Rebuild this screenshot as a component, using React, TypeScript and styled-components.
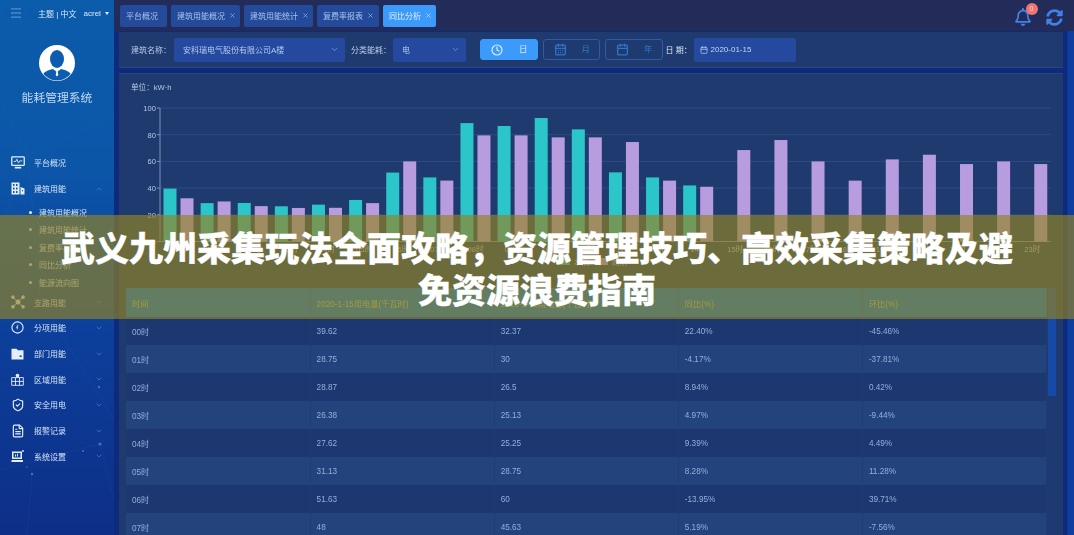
import React from 'react'
import styled, { createGlobalStyle } from 'styled-components'
import { Calendar, CalendarDays, ChevronDown, ChevronUp, Clock, FileText, Menu, ShieldCheck, X } from 'lucide-react'
import { FaRegBell, FaSyncAlt } from 'react-icons/fa'

const FONT = `"Liberation Sans", "Noto Sans CJK SC", sans-serif`

const GlobalStyle = createGlobalStyle`
  html, body { margin: 0; padding: 0; height: 100%; overflow: hidden; background: #0d2a7c; }
  #root { height: 535px; }
  * { box-sizing: border-box; }
`

const Page = styled.div`
  position: relative;
  width: 1074px;
  height: 535px;
  overflow: hidden;
  font-family: ${FONT};
`

const Shell = styled.div`
  display: grid;
  grid-template-columns: 114px 1fr;
  height: 100%;
  filter: blur(0.45px);
`

const Sidebar = styled.aside`
  position: relative;
  display: flex;
  flex-direction: column;
  overflow: hidden;
  background: linear-gradient(180deg, #0b5cab 0%, #0c56a8 30%, #0c3f9b 62%, #0e2e86 100%);
  color: #d5e3f6;
`

const SideTop = styled.div`
  display: flex;
  align-items: center;
  height: 26px;
  padding-left: 9px;
  font-size: 8px;
  color: #dce8f8;
`

const Burger = styled(Menu)`
  color: #8fb9e6;
  margin-right: 15px;
`

const Lang = styled.span`
  white-space: nowrap;
  margin-right: 7px;
`

const Caret = styled.span`
  display: inline-block;
  margin-left: 4px;
  border-left: 2.5px solid transparent;
  border-right: 2.5px solid transparent;
  border-top: 3px solid #e8f0fb;
  vertical-align: 1px;
`

const Brand = styled.div`
  display: flex;
  flex-direction: column;
  align-items: center;
  height: 124px;
  padding-top: 19px;
`

const BrandName = styled.div`
  margin-top: 7px;
  font-size: 11.8px;
  color: #c3d8f0;
  white-space: nowrap;
`

const Nav = styled.nav`
  position: relative;
  display: flex;
  flex-direction: column;
`

const NavRow = styled.div`
  display: flex;
  align-items: center;
  height: 25.7px;
  padding-left: 10.5px;
  font-size: 8px;
  color: #d5e3f6;
`

const NavIcon = styled.span`
  display: flex;
  justify-content: center;
  width: 14px;
  margin-right: 9.5px;
  color: #e4eefb;
`

const NavLabel = styled.span`
  flex: 1;
  white-space: nowrap;
`

const NavChevron = styled.span`
  display: flex;
  margin-right: 11px;
  color: #4f86c9;
`

const SubList = styled.div`
  height: 88px;
  padding-top: 2px;
`

const SubRow = styled.div`
  display: flex;
  align-items: center;
  height: 17.5px;
  padding-left: 29px;
  font-size: 8px;
  white-space: nowrap;
  color: #d5e3f6;

  &::before {
    content: '';
    width: 3px;
    height: 3px;
    margin-right: 7px;
    border-radius: 50%;
    background: #e4eefb;
  }
`

const SidebarDecor = styled.svg`
  position: absolute;
  inset: 0;
  pointer-events: none;
`

const Main = styled.main`
  display: flex;
  flex-direction: column;
  min-width: 0;
  background: linear-gradient(90deg, #0d2a7c 0, #0d2a7c 953px, #0f3f9e 954px);
`

const TopBar = styled.header`
  display: flex;
  align-items: center;
  height: 31px;
  padding: 0 11px 0 6px;
  background: #232c58;
  gap: 4px;
`

const Tab = styled.div<{ $active?: boolean; $w: number }>`
  display: flex;
  align-items: center;
  gap: 4px;
  width: ${p => p.$w}px;
  height: 22px;
  padding-left: 6px;
  border-radius: 2px;
  font-size: 8px;
  white-space: nowrap;
  color: ${p => (p.$active ? '#e2efff' : '#a9c3ea')};
  background: ${p => (p.$active ? '#3c9afa' : '#244a9b')};
`

const TopActions = styled.div`
  display: flex;
  align-items: center;
  gap: 14px;
  margin-left: auto;
  padding-top: 3px;
  color: #3f80ea;
`

const BellWrap = styled.div`
  position: relative;
  display: flex;
`

const Badge = styled.span`
  position: absolute;
  top: -5px;
  right: -5.5px;
  width: 12px;
  height: 12px;
  border-radius: 50%;
  background: #ef7473;
  color: #ffc9c4;
  font-size: 7px;
  line-height: 12px;
  text-align: center;
`

const Content = styled.div`
  flex: 1;
  display: flex;
  flex-direction: column;
  gap: 5px;
  width: 949px;
  padding: 1px 0 0 5px;
  min-height: 0;
`

const Filters = styled.section`
  display: flex;
  align-items: center;
  height: 36px;
  padding-left: 12px;
  background: #1e3a6f;
  border-bottom: 1px solid #24488a;
  font-size: 8px;
  color: #b8cbe8;
`

const FieldLabel = styled.span<{ $gap?: number; $bright?: boolean }>`
  width: ${p => p.$gap ?? 43}px;
  white-space: nowrap;
  color: ${p => (p.$bright ? '#dbe6f6' : '#b8cbe8')};
`

const Select = styled.div<{ $w: number }>`
  display: flex;
  align-items: center;
  justify-content: space-between;
  width: ${p => p.$w}px;
  height: 24px;
  margin-right: 6px;
  padding: 0 6px 0 9px;
  border-radius: 2px;
  background: #24499f;
  color: #b4cbee;
  white-space: nowrap;
`

const Arrow = styled(ChevronDown)`
  color: #7fa3dc;
`

const ModeGroup = styled.div`
  display: flex;
  gap: 5px;
  margin: 0 3px 0 8px;
`

const ModeButton = styled.div<{ $active?: boolean }>`
  display: flex;
  align-items: center;
  justify-content: space-between;
  width: 57.5px;
  height: 21.5px;
  padding: 0 9px 0 10px;
  border-radius: 3px;
  border: 1px solid ${p => (p.$active ? '#3c9afa' : '#2a5cab')};
  background: ${p => (p.$active ? '#3c9afa' : 'transparent')};
  color: ${p => (p.$active ? '#d9ecff' : '#2f74c8')};
  font-size: 8.5px;
`

const ModeText = styled.span`
  line-height: 1;
`

const DateInput = styled.div`
  display: flex;
  align-items: center;
  gap: 3px;
  width: 102px;
  height: 24px;
  padding-left: 6px;
  border-radius: 2px;
  background: #24499f;
  color: #c3d6f2;
`

const ChartPanel = styled.section`
  flex: 1;
  display: flex;
  flex-direction: column;
  min-height: 0;
  overflow: hidden;
  background: #1e3a6f;
  border-top: 1px solid #26467f;
`

const Unit = styled.div`
  height: 25px;
  padding: 7px 0 0 12px;
  font-size: 7.6px;
  color: #b8cbe8;
`

const ChartSvg = styled.svg`
  display: block;
  flex: none;
  margin-bottom: 4px;
`

const AxisText = styled.text`
  font-family: ${FONT};
  font-size: 7.6px;
  fill: #b6c8e6;
`

const TableArea = styled.div`
  display: flex;
  padding-left: 7px;
`

const DataTable = styled.table`
  width: 921px;
  flex: none;
  border-collapse: collapse;
  table-layout: fixed;
  font-size: 8.2px;
`

const HeadCell = styled.th`
  height: 29px;
  padding: 0 6px;
  font-weight: 400;
  text-align: left;
  white-space: nowrap;
  color: #c2c878;
  background: #0070e0;
  border-right: 1px solid #1f5f9e;
`

const Row = styled.tr<{ $alt: boolean }>`
  background: ${p => (p.$alt ? '#23437d' : '#1d3870')};
`

const Cell = styled.td`
  height: 28px;
  padding: 0 6px;
  color: #93afdc;
  white-space: nowrap;
  border-right: 1px solid #1f3d74;
`

const ScrollTrack = styled.div`
  width: 8px;
  margin-left: 1px;
  height: 250px;
  background: #1d3a72;
`

const ScrollThumb = styled.div`
  height: 108px;
  background: #174aa6;
`

const Banner = styled.div`
  position: absolute;
  left: 0;
  right: 0;
  top: 215px;
  height: 104px;
  display: flex;
  align-items: center;
  justify-content: center;
  padding: 1px 55px 0;
  background: rgba(148, 131, 36, 0.67);
`

const BannerTitle = styled.h1`
  margin: 0;
  font-family: "Noto Sans CJK SC", "Liberation Sans", sans-serif;
  font-size: 34px;
  font-weight: 900;
  line-height: 42px;
  text-align: center;
  color: #fff;
  -webkit-text-stroke: 0.35px #fff;
`

const tabs = [
  { label: '平台概况', w: 47, closable: false },
  { label: '建筑用能概况', w: 69, closable: true },
  { label: '建筑用能统计', w: 69, closable: true },
  { label: '复费率报表', w: 62, closable: true },
  { label: '同比分析', w: 53, closable: true, active: true },
]

const current = [39.62, 28.75, 28.87, 26.38, 27.62, 31.13, 51.63, 48, 88.7, 86.5, 92.5, 84, 51.8, 48, 42]
const previous = [32.37, 30, 26.5, 25.13, 25.25, 28.75, 60, 45.63, 79.5, 79.5, 78, 78, 74.5, 45.6, 41, 68.5, 76, 60, 45.6, 61.5, 65, 58, 60, 58]

const rows = [
  ['00时', '39.62', '32.37', '22.40%', '-45.46%'],
  ['01时', '28.75', '30', '-4.17%', '-37.81%'],
  ['02时', '28.87', '26.5', '8.94%', '0.42%'],
  ['03时', '26.38', '25.13', '4.97%', '-9.44%'],
  ['04时', '27.62', '25.25', '9.39%', '4.49%'],
  ['05时', '31.13', '28.75', '8.28%', '11.28%'],
  ['06时', '51.63', '60', '-13.95%', '39.71%'],
  ['07时', '48', '45.63', '5.19%', '-7.56%'],
]

const IconMonitor = () => (
  <svg width="14" height="13" viewBox="0 0 13 12" fill="none" stroke="currentColor">
    <rect x="0.7" y="0.7" width="11.6" height="8" rx="0.6" strokeWidth="1.2" />
    <path d="M2.5 5h2l1-2 1.5 3.5L8 4.5h2.5" strokeWidth="0.8" />
    <path d="M3.5 10.8h6" strokeWidth="1.6" />
  </svg>
)

const IconBuilding = () => (
  <svg width="14" height="15" viewBox="0 0 14 13" fill="currentColor">
    <path d="M0.5 0.5h8v12h-8zM9.5 5l4 1.5v6h-4z" />
    <path fill="#0c56a8" d="M2 2h1.5v2H2zM5 2h1.5v2H5zM2 5.5h1.5v2H2zM5 5.5h1.5v2H5zM2 9h1.5v2H2zM5 9h1.5v2H5zM11 8h1v1.2h-1z" />
  </svg>
)

const IconBranch = () => (
  <svg width="14" height="14" viewBox="0 0 13 13" fill="currentColor" stroke="currentColor" strokeWidth="0.8">
    <circle cx="6.5" cy="6.5" r="2" />
    <circle cx="1.8" cy="2" r="1.3" />
    <circle cx="11.2" cy="2" r="1.3" />
    <circle cx="1.8" cy="11" r="1.3" />
    <circle cx="11.2" cy="11" r="1.3" />
    <path d="M1.8 2l9.4 9M11.2 2l-9.4 9" />
  </svg>
)

const IconDial = () => (
  <svg width="13" height="13" viewBox="0 0 13 13" fill="none" stroke="currentColor" strokeWidth="1.1">
    <circle cx="6.5" cy="6.5" r="5.6" />
    <path d="M7.4 4.2c-1-.3-1.2.4-1.2 1v3.2M5.2 6.2h2" strokeWidth="0.8" />
  </svg>
)

const IconFolder = () => (
  <svg width="13" height="12" viewBox="0 0 13 12" fill="currentColor">
    <path d="M0.5 0.8h5l1.4 1.4h5.6v9.3h-12z" />
    <path fill="#0c4aa2" d="M8.6 7.4h2v1.6h-2z" />
  </svg>
)

const IconRegion = () => (
  <svg width="13" height="13" viewBox="0 0 13 13" fill="none" stroke="currentColor">
    <path d="M0.7 4.6h11.6v7.7H0.7zM0.7 8.4h11.6M4.5 4.6v7.7M8.5 4.6v7.7" strokeWidth="0.9" />
    <circle cx="6.5" cy="2.6" r="1.8" fill="currentColor" stroke="none" />
  </svg>
)

const IconSettings = () => (
  <svg width="13" height="13" viewBox="0 0 13 13" fill="currentColor">
    <path d="M1 1.5h10v7.5H1z" />
    <path fill="#0d3f9c" d="M2.5 3h7v4.5h-7z" />
    <path d="M4 4.5h1v2H4zM6 3.8h1v2.7H6z" />
    <path d="M0.5 10h11.5v2H0.5z" />
    <circle cx="12" cy="1" r="0.9" />
  </svg>
)

const Avatar = () => (
  <svg width="36" height="36" viewBox="0 0 36 36">
    <circle cx="18" cy="18" r="18" fill="#fff" />
    <clipPath id="avatar-clip">
      <circle cx="18" cy="18" r="17.5" />
    </clipPath>
    <g clipPath="url(#avatar-clip)" fill="#0d5cb0">
      <ellipse cx="18" cy="14" rx="7" ry="9" />
      <path d="M3 33c0-6 6-8 11-9l4 3 4-3c5 1 11 3 11 9l-6 3H9z" />
    </g>
    <path d="M17 25l1-1 1 1-.5 1 .8 4-1.3 1.5-1.3-1.5.8-4z" fill="#fff" />
  </svg>
)

const xOf = (i: number) => 44.5 + i * 37.12
const yOf = (v: number) => 142.5 - v * 1.335

const Chart = () => (
  <ChartSvg width="944" height="185" viewBox="0 0 944 185">
    {[0, 20, 40, 60, 80, 100].map(v => (
      <g key={v}>
        <line x1="41" x2="932" y1={yOf(v)} y2={yOf(v)} stroke={v === 0 ? '#7d92bb' : '#2f4c85'} strokeWidth="1" />
        <line x1="38" x2="41" y1={yOf(v)} y2={yOf(v)} stroke="#7d92bb" />
        <AxisText x="37" y={yOf(v) + 3} textAnchor="end">{v}</AxisText>
      </g>
    ))}
    <line x1="41" x2="41" y1="9" y2="142.5" stroke="#7d92bb" />
    {current.map((v, i) => (
      <rect key={i} x={xOf(i)} y={yOf(v)} width="13" height={v * 1.335} fill="#2bc6ca" />
    ))}
    {previous.map((v, i) => (
      <rect key={i} x={xOf(i) + 17} y={yOf(v)} width="13" height={v * 1.335} fill="#b79ddf" />
    ))}
    {previous.map((_, i) => (
      <AxisText key={i} x={xOf(i) + 15} y="153" textAnchor="middle">{String(i).padStart(2, '0')}时</AxisText>
    ))}
    <rect x="437" y="159" width="14" height="7" fill="#2bc6ca" />
    <AxisText x="455" y="166">本期</AxisText>
    <rect x="475" y="159" width="14" height="7" fill="#b79ddf" />
    <AxisText x="493" y="166">同期</AxisText>
  </ChartSvg>
)

const navAfter = [
  { label: '支路用能', icon: <IconBranch /> },
  { label: '分项用能', icon: <IconDial /> },
  { label: '部门用能', icon: <IconFolder /> },
  { label: '区域用能', icon: <IconRegion /> },
  { label: '安全用电', icon: <ShieldCheck size={14} /> },
  { label: '报警记录', icon: <FileText size={14} /> },
  { label: '系统设置', icon: <IconSettings /> },
]

const App = () => (
  <Page>
    <GlobalStyle />
    <Shell>
      <Sidebar>
        <SidebarDecor width="114" height="535" viewBox="0 0 114 535">
          <g stroke="#5f9ae0" strokeOpacity="0.07" fill="none">
            <path d="M0 100L28 155L114 115M28 155L0 230M28 155L40 300L114 420M0 470L100 444L114 500M32 474L27 535" />
          </g>
          <g fill="#7ea8e8" fillOpacity="0.5">
            <circle cx="99" cy="387" r="1.2" />
            <circle cx="100" cy="444" r="1.6" />
            <circle cx="83" cy="451" r="1.1" />
            <circle cx="32" cy="474" r="1.2" />
            <circle cx="27" cy="467" r="0.8" />
          </g>
        </SidebarDecor>
        <SideTop>
          <Burger size={14} strokeWidth={1.2} />
          <Lang>主题 | 中文</Lang>
          <span>acrel<Caret /></span>
        </SideTop>
        <Brand>
          <Avatar />
          <BrandName>能耗管理系统</BrandName>
        </Brand>
        <Nav>
          <NavRow>
            <NavIcon><IconMonitor /></NavIcon>
            <NavLabel>平台概况</NavLabel>
          </NavRow>
          <NavRow>
            <NavIcon><IconBuilding /></NavIcon>
            <NavLabel>建筑用能</NavLabel>
            <NavChevron><ChevronUp size={8} /></NavChevron>
          </NavRow>
          <SubList>
            <SubRow>建筑用能概况</SubRow>
            <SubRow>建筑用能统计</SubRow>
            <SubRow>复费率报表</SubRow>
            <SubRow>同比分析</SubRow>
            <SubRow>能源流向图</SubRow>
          </SubList>
          {navAfter.map(item => (
            <NavRow key={item.label}>
              <NavIcon>{item.icon}</NavIcon>
              <NavLabel>{item.label}</NavLabel>
              <NavChevron><ChevronDown size={8} /></NavChevron>
            </NavRow>
          ))}
        </Nav>
      </Sidebar>
      <Main>
        <TopBar>
          {tabs.map(tab => (
            <Tab key={tab.label} $w={tab.w} $active={tab.active}>
              {tab.label}
              {tab.closable && <X size={7} />}
            </Tab>
          ))}
          <TopActions>
            <BellWrap>
              <FaRegBell size={18} />
              <Badge>0</Badge>
            </BellWrap>
            <FaSyncAlt size={17} />
          </TopActions>
        </TopBar>
        <Content>
          <Filters>
            <FieldLabel>建筑名称：</FieldLabel>
            <Select $w={171}>安科瑞电气股份有限公司A楼<Arrow size={9} /></Select>
            <FieldLabel $gap={42}>分类能耗：</FieldLabel>
            <Select $w={73}>电<Arrow size={9} /></Select>
            <ModeGroup>
              <ModeButton $active><Clock size={12} strokeWidth={2.4} /><ModeText>日</ModeText></ModeButton>
              <ModeButton><CalendarDays size={13} strokeWidth={2.4} /><ModeText>月</ModeText></ModeButton>
              <ModeButton><Calendar size={13} strokeWidth={2.4} /><ModeText>年</ModeText></ModeButton>
            </ModeGroup>
            <FieldLabel $gap={28} $bright>日 期：</FieldLabel>
            <DateInput><Calendar size={8} />2020-01-15</DateInput>
          </Filters>
          <ChartPanel>
            <Unit>单位：kW·h</Unit>
            <Chart />
            <TableArea>
              <DataTable>
                <thead>
                  <tr>
                    <HeadCell>时间</HeadCell>
                    <HeadCell>2020-1-15用电量(千瓦时)</HeadCell>
                    <HeadCell>2019-1-15用电量(千瓦时)</HeadCell>
                    <HeadCell>同比(%)</HeadCell>
                    <HeadCell>环比(%)</HeadCell>
                  </tr>
                </thead>
                <tbody>
                  {rows.map((row, i) => (
                    <Row key={row[0]} $alt={i % 2 === 1}>
                      {row.map((value, j) => <Cell key={j}>{value}</Cell>)}
                    </Row>
                  ))}
                </tbody>
              </DataTable>
              <ScrollTrack><ScrollThumb /></ScrollTrack>
            </TableArea>
          </ChartPanel>
        </Content>
      </Main>
    </Shell>
    <Banner>
      <BannerTitle>武义九州采集玩法全面攻略，资源管理技巧、高效采集策略及避免资源浪费指南</BannerTitle>
    </Banner>
  </Page>
)

export default App
